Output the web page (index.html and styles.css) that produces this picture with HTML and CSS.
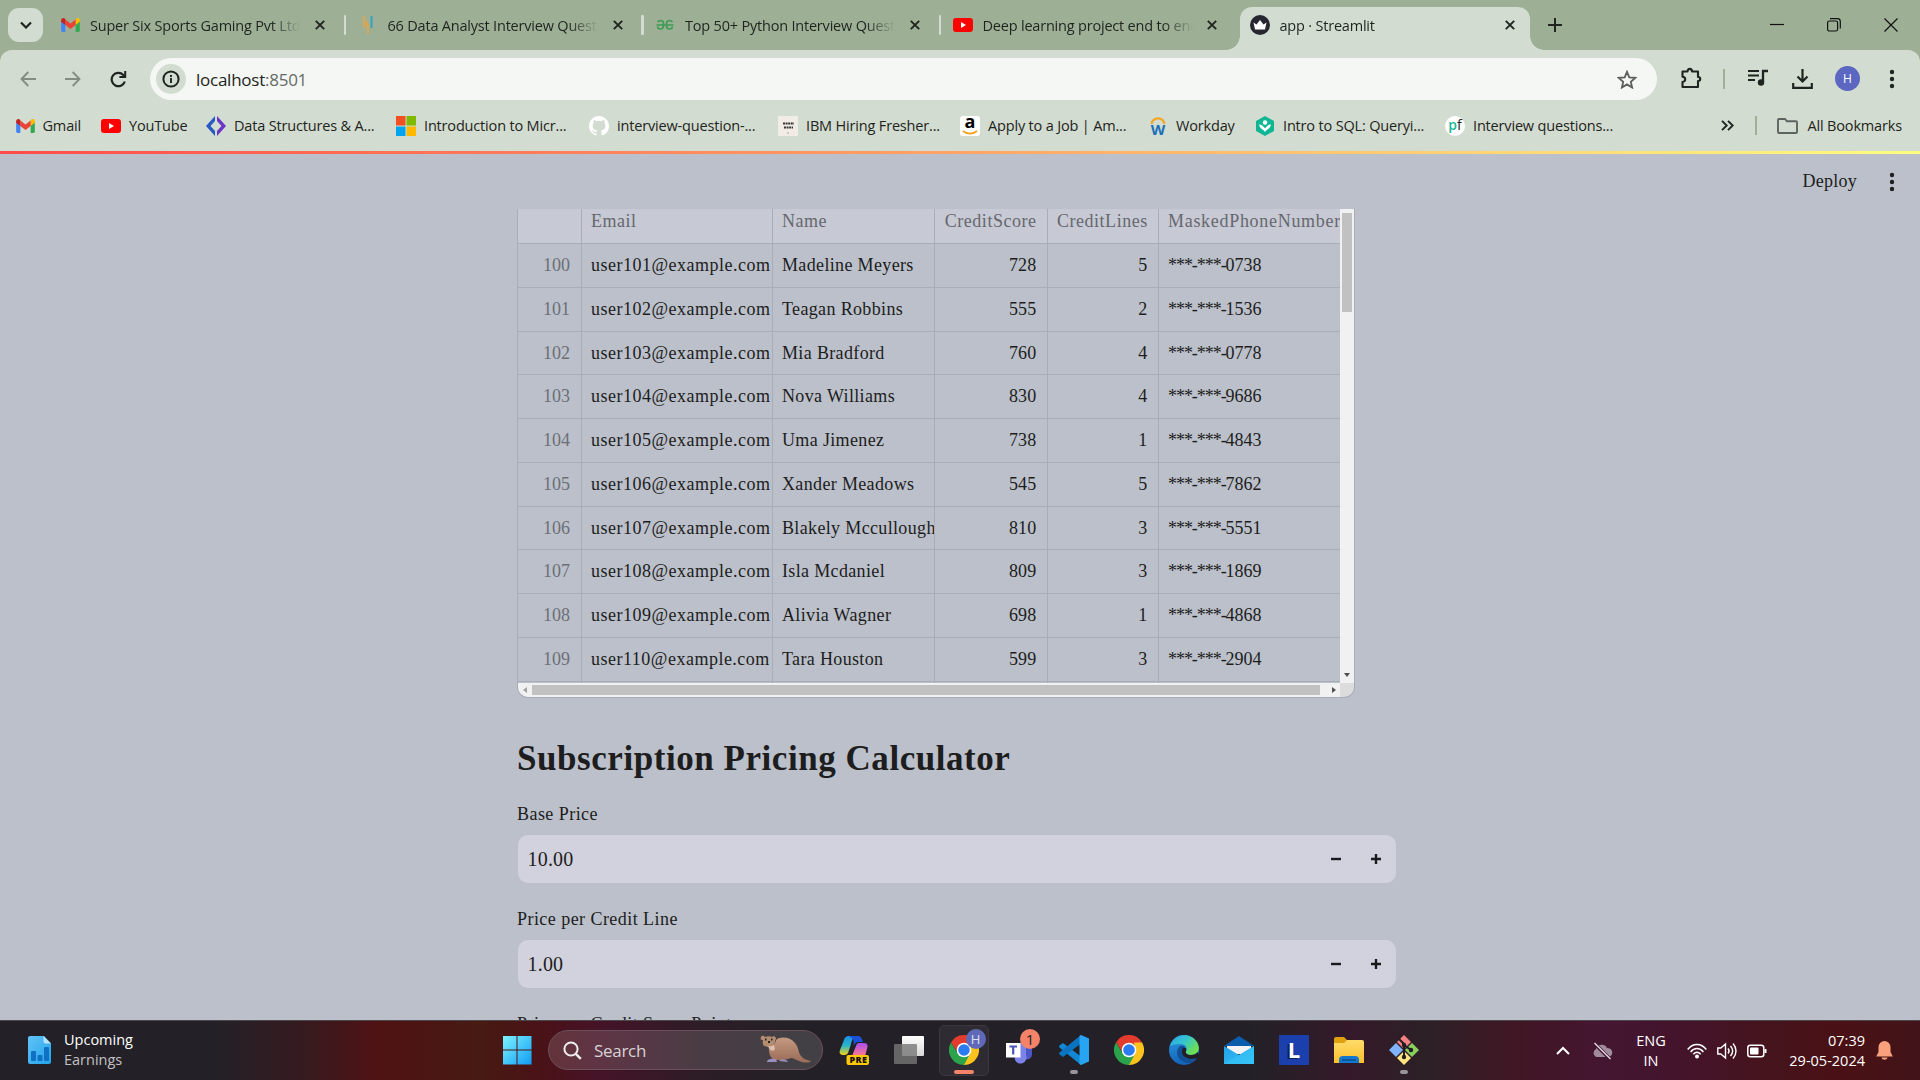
FILE: index.html
```html
<!DOCTYPE html>
<html lang="en">
<head>
<meta charset="utf-8">
<title>app · Streamlit</title>
<link rel="stylesheet" href="styles.css">
</head>
<body>
<svg class="defs" width="0" height="0" aria-hidden="true">
  <defs>
    <linearGradient id="win" x1="0" y1="0" x2="1" y2="1"><stop offset="0" stop-color="#7df3ff"/><stop offset="1" stop-color="#109cf5"/></linearGradient>
    <linearGradient id="doc" x1="0" y1="0" x2="1" y2="1"><stop offset="0" stop-color="#63c3f7"/><stop offset="1" stop-color="#20a4ec"/></linearGradient>
    <linearGradient id="copA" x1="0" y1="0" x2="0" y2="1"><stop offset="0" stop-color="#1f8fe8"/><stop offset=".5" stop-color="#27b6c9"/><stop offset="1" stop-color="#f4d414"/></linearGradient>
    <linearGradient id="copB" x1="0" y1="0" x2="0" y2="1"><stop offset="0" stop-color="#a94df0"/><stop offset="1" stop-color="#ff7a8a"/></linearGradient>
    <linearGradient id="edgeA" x1="0" y1="0" x2="1" y2=".6"><stop offset="0" stop-color="#2aa4e8"/><stop offset=".5" stop-color="#35c5d0"/><stop offset="1" stop-color="#6fe04c"/></linearGradient>
    <linearGradient id="edgeB" x1="0" y1="0" x2="0" y2="1"><stop offset="0" stop-color="#2b9be0"/><stop offset="1" stop-color="#1363b8"/></linearGradient>
    <linearGradient id="fold" x1="0" y1="0" x2="0" y2="1"><stop offset="0" stop-color="#ffdc6b"/><stop offset="1" stop-color="#fcbf2d"/></linearGradient>
    <linearGradient id="env" x1="0" y1="0" x2="1" y2="1"><stop offset="0" stop-color="#23a0e8"/><stop offset="1" stop-color="#35c4f5"/></linearGradient>
    <linearGradient id="pane" x1="0" y1="0" x2="0" y2="1"><stop offset="0" stop-color="#fff"/><stop offset="1" stop-color="#d8d8d8"/></linearGradient>
    <linearGradient id="fur" x1="0" y1="0" x2="0" y2="1"><stop offset="0" stop-color="#c49a7f"/><stop offset="1" stop-color="#9a6b57"/></linearGradient>
    <symbol id="gmail" viewBox="0 0 20 15"><path fill="#4285f4" d="M0 3v10.500a1.500 1.500 0 0 0 1.500 1.500H4.500V6z"/><path fill="#34a853" d="M15.500 15h3a1.500 1.500 0 0 0 1.500-1.500V3l-4.500 3z"/><path fill="#fbbc04" d="M15.500 2v5.500L20 4V2.500C20 .3 17.600-.8 16 .5z"/><path fill="#ea4335" d="M4.500 7.500V1.500L10 5.800l5.500-4.300v6L10 11.800z"/><path fill="#c5221f" d="M0 2.500V4l4.500 3.500V1.500L4 .6C2.400-.7 0 .3 0 2.500z"/></symbol>
    <symbol id="youtube" viewBox="0 0 20 14"><rect width="20" height="14" rx="3" fill="#f00"/><path fill="#fff" d="M8 4l5 3-5 3z"/></symbol>
    <symbol id="close" viewBox="0 0 10 10"><path d="M.8.8l8.400 8.400M9.200.8L.8 9.200" fill="none" stroke="#1f2420" stroke-width="1.900"/></symbol>
    <symbol id="dots" viewBox="0 0 6 20"><circle cx="3" cy="3" r="2.200"/><circle cx="3" cy="10" r="2.200"/><circle cx="3" cy="17" r="2.200"/></symbol>
    <symbol id="chrome" viewBox="0 0 30 30"><path fill="#e33b2e" d="M2 7.500A15 15 0 0 1 28 7.500L28 9H15l-6 9z"/><path fill="#fcc31e" d="M28 7.500A15 15 0 0 1 15 30l-1-1 7-11-1-10.500z"/><path fill="#2ba24c" d="M2 7.500A15 15 0 0 0 15 30l6.200-11.500L15 21.500l-6.200-3z"/><circle cx="15" cy="15" r="7.300" fill="#fff"/><circle cx="15" cy="15" r="5.800" fill="#2b7cf0"/></symbol>
  </defs>
</svg>

<div class="screen">
  <header class="browser">
    <div class="tabstrip">
      <button class="tab-search"><svg width="12" height="8" viewBox="0 0 12 8"><path d="M1 1.500l5 5 5-5" fill="none" stroke="#1f2420" stroke-width="2.200"/></svg></button>
      <div class="tab first"><svg class="fav" width="19" height="14"><use href="#gmail"/></svg><span class="tab-title">Super Six Sports Gaming Pvt Ltd</span><svg class="x" width="10" height="10"><use href="#close"/></svg></div>
      <div class="tab"><svg class="fav" width="20" height="20" viewBox="0 0 20 20"><path d="M6 1v12M9 6v5M10 9v10" stroke="#e5a646" stroke-width="1.800"/><path d="M13.500 1v12" stroke="#36a3bd" stroke-width="2"/></svg><span class="tab-title">66 Data Analyst Interview Questions</span><svg class="x" width="10" height="10"><use href="#close"/></svg></div>
      <div class="tab"><svg class="fav" width="20" height="20" viewBox="0 0 20 20"><path d="M1.500 10h17M2.500 7c1.500-2 6-2 6 1.500v2c0 4.500-5.500 4.500-6 1M17.500 7c-1.500-2-6-2-6 1.500v2c0 4.500 5.500 4.500 6 1" fill="none" stroke="#3f9b56" stroke-width="1.700"/></svg><span class="tab-title">Top 50+ Python Interview Questions</span><svg class="x" width="10" height="10"><use href="#close"/></svg></div>
      <div class="tab last"><svg class="fav" width="20" height="14"><use href="#youtube"/></svg><span class="tab-title">Deep learning project end to end</span><svg class="x" width="10" height="10"><use href="#close"/></svg></div>
      <div class="tab active"><svg class="fav" width="20" height="20" viewBox="0 0 20 20"><circle cx="10" cy="10" r="10" fill="#262730"/><path d="M3.500 7.500l3 2L10 5l3.500 4.500 3-2-1.500 7H5z" fill="#fff"/></svg><span class="tab-title">app · Streamlit</span><svg class="x" width="10" height="10"><use href="#close"/></svg></div>
      <svg class="new-tab" width="14" height="14" viewBox="0 0 14 14"><path d="M7 0v14M0 7h14" stroke="#1f2420" stroke-width="2"/></svg>
      <div class="window-buttons">
        <svg width="14" height="14" viewBox="0 0 14 14"><path d="M0 6.500h14" stroke="#111" stroke-width="1.200"/></svg>
        <svg width="14" height="14" viewBox="0 0 14 14"><g fill="none" stroke="#111" stroke-width="1.200"><rect x=".6" y="3" width="10" height="10" rx="1.800"/><path d="M3 .7h7.500a2.800 2.800 0 0 1 2.800 2.800V10.500"/></g></svg>
        <svg width="14" height="14" viewBox="0 0 14 14"><path d="M.5.5l13 13M13.500.5l-13 13" stroke="#111" stroke-width="1.200"/></svg>
      </div>
    </div>

    <div class="toolbar">
      <nav class="nav-buttons">
        <svg width="16" height="16" viewBox="0 0 16 16"><path d="M16 8H1.500M8.300 1L1.500 8l6.800 7" fill="none" stroke="#858c84" stroke-width="1.900"/></svg>
        <svg width="16" height="16" viewBox="0 0 16 16"><path d="M0 8h14.500M7.700 1l6.800 7-6.800 7" fill="none" stroke="#858c84" stroke-width="1.900"/></svg>
        <svg width="17" height="17" viewBox="0 0 17 17"><path d="M14.800 10.500a6.700 6.700 0 1 1-1.500-6.600l1 1.200" fill="none" stroke="#1f2420" stroke-width="2.200"/><path d="M16.200 0v7H9.400V5h4.800V0z" fill="#1f2420"/></svg>
      </nav>
      <div class="omnibox">
        <span class="site-info"><svg width="18" height="18" viewBox="0 0 18 18"><circle cx="9" cy="9" r="7.600" fill="none" stroke="#1f2420" stroke-width="2"/><path d="M9 8v5M9 5v1.900" stroke="#1f2420" stroke-width="1.900"/></svg></span>
        <span class="url">localhost<i>:8501</i></span>
        <svg class="star" width="20" height="19" viewBox="0 0 20 19"><path d="M10 1.800l2.300 5.500 6 .5-4.500 4 1.300 5.700-5.100-3.100-5.100 3.100 1.300-5.700-4.500-4 6-.5z" fill="none" stroke="#5a5f5a" stroke-width="1.800"/></svg>
      </div>
      <svg class="ext" width="22" height="22" viewBox="0 0 22 22"><path d="M3 4.500h4.500c0-3.500 4.500-3.500 4.500 0h6v5.500c3 0 3 4 0 4v6H2.500v-5c3.600-.5 3.600-5 0-5.200V4.500z" fill="none" stroke="#1f2420" stroke-width="2.100" stroke-linejoin="round"/></svg>
      <i class="bar"></i>
      <svg class="music" width="20" height="18" viewBox="0 0 20 18"><path d="M0 2h11M0 6.500h11M0 11h7" stroke="#1f2420" stroke-width="2"/><path d="M15 1v12M14 2h6" stroke="#1f2420" stroke-width="2.300"/><circle cx="13" cy="13.500" r="3.200" fill="#1f2420"/></svg>
      <svg class="down" width="21" height="20" viewBox="0 0 21 20"><path d="M10.500 0v12M5.500 7.500l5 5 5-5M1.200 14v4.800h18.600V14" fill="none" stroke="#1f2420" stroke-width="2.200"/></svg>
      <span class="avatar">H</span>
      <svg class="menu" width="6" height="20" fill="#1f2420"><use href="#dots"/></svg>
    </div>

    <div class="bookmarks">
      <a><svg width="19" height="14"><use href="#gmail"/></svg><span>Gmail</span></a>
      <a><svg width="20" height="14"><use href="#youtube"/></svg><span>YouTube</span></a>
      <a><svg width="20" height="20" viewBox="0 0 20 20"><path d="M9 0L0 10l9 10v-5L4.500 10 9 5z" fill="#2759c5"/><path d="M11 0l9 10-9 10v-5l4.500-5L11 5z" fill="#6b35c9"/></svg><span>Data Structures &amp; A...</span></a>
      <a><svg width="20" height="20" viewBox="0 0 20 20"><path fill="#f25022" d="M0 0h9.500v9.500H0z"/><path fill="#7fba00" d="M10.500 0H20v9.500h-9.500z"/><path fill="#00a4ef" d="M0 10.500h9.500V20H0z"/><path fill="#ffb900" d="M10.500 10.500H20V20h-9.500z"/></svg><span>Introduction to Micr...</span></a>
      <a><svg width="20" height="20" viewBox="0 0 16 16"><path fill="#fff" d="M8 0C3.580 0 0 3.580 0 8c0 3.540 2.290 6.530 5.470 7.590.4.070.55-.17.55-.38 0-.19-.01-.82-.01-1.490-2.010.37-2.530-.49-2.690-.94-.09-.23-.48-.94-.82-1.130-.28-.15-.68-.52-.01-.53.63-.01 1.080.58 1.230.82.720 1.210 1.870.87 2.330.66.070-.52.280-.87.510-1.070-1.780-.2-3.640-.89-3.640-3.950 0-.87.310-1.590.82-2.150-.08-.2-.36-1.020.08-2.120 0 0 .67-.21 2.200.82a7.640 7.640 0 0 1 4 0c1.530-1.040 2.200-.82 2.200-.82.440 1.100.16 1.920.08 2.120.51.560.82 1.270.82 2.150 0 3.070-1.870 3.750-3.650 3.950.29.250.54.730.54 1.480 0 1.070-.01 1.930-.01 2.200 0 .21.150.46.550.38A8.010 8.010 0 0 0 16 8c0-4.420-3.580-8-8-8z"/></svg><span>interview-question-...</span></a>
      <a><svg width="20" height="20" viewBox="0 0 20 20"><path fill="#f1ece6" d="M0 0h20v20H0z"/><path d="M5 7.500h11M6 11.500h9" stroke="#333" stroke-width="2" stroke-dasharray="2 .6"/><path d="M9 17h2" stroke="#aaa"/></svg><span>IBM Hiring Fresher...</span></a>
      <a><span class="amazon">a<svg width="16" height="5" viewBox="0 0 16 5"><path d="M1 1c4 3.500 10 3.500 14 0" fill="none" stroke="#f8a21c" stroke-width="1.700"/></svg></span><span>Apply to a Job | Am...</span></a>
      <a><span class="workday"><svg width="16" height="7" viewBox="0 0 16 7"><path d="M1.500 7C3-.5 13-.5 14.500 7" fill="none" stroke="#f5a623" stroke-width="2.200"/></svg>W</span><span>Workday</span></a>
      <a><svg width="20" height="20" viewBox="0 0 20 20"><path d="M10 0l9 5v10l-9 5-9-5V5z" fill="#10b694"/><circle cx="10" cy="6.500" r="2.200" fill="#fff"/><path d="M4 8.500c1 5 4 4 6 7.500 2-3.500 5-2.500 6-7.500-3 0-4.500 2-6 4-1.500-2-3-4-6-4z" fill="#fff"/></svg><span>Intro to SQL: Queryi...</span></a>
      <a><span class="pf"><b>p</b>f</span><span>Interview questions...</span></a>
      <svg class="more" width="13" height="11" viewBox="0 0 13 11"><path d="M1 .8l4.700 4.700L1 10.200M7 .8l4.700 4.700L7 10.200" fill="none" stroke="#1f2420" stroke-width="1.900"/></svg>
      <i class="bar"></i>
      <a class="all"><svg width="21" height="16" viewBox="0 0 21 16"><path d="M1 14V2a1 1 0 0 1 1-1h6l2 2.300h9a1 1 0 0 1 1 1V14a1 1 0 0 1-1 1H2a1 1 0 0 1-1-1z" fill="none" stroke="#5f6360" stroke-width="1.900"/></svg><span>All Bookmarks</span></a>
    </div>
  </header>

  <main class="app">
    <div class="decoration"></div>
    <div class="app-header"><span>Deploy</span><svg width="6" height="20" fill="#1f1f22"><use href="#dots"/></svg></div>
    <section class="block">
      <div class="frame">
        <div class="grid">
          <div class="row head"><span></span><span>Email</span><span>Name</span><span>CreditScore</span><span>CreditLines</span><span>MaskedPhoneNumber</span></div>
          <div class="row"><span>100</span><span>user101@example.com</span><span>Madeline Meyers</span><span>728</span><span>5</span><span><i>***-***-</i>0738</span></div>
          <div class="row"><span>101</span><span>user102@example.com</span><span>Teagan Robbins</span><span>555</span><span>2</span><span><i>***-***-</i>1536</span></div>
          <div class="row"><span>102</span><span>user103@example.com</span><span>Mia Bradford</span><span>760</span><span>4</span><span><i>***-***-</i>0778</span></div>
          <div class="row"><span>103</span><span>user104@example.com</span><span>Nova Williams</span><span>830</span><span>4</span><span><i>***-***-</i>9686</span></div>
          <div class="row"><span>104</span><span>user105@example.com</span><span>Uma Jimenez</span><span>738</span><span>1</span><span><i>***-***-</i>4843</span></div>
          <div class="row"><span>105</span><span>user106@example.com</span><span>Xander Meadows</span><span>545</span><span>5</span><span><i>***-***-</i>7862</span></div>
          <div class="row"><span>106</span><span>user107@example.com</span><span>Blakely Mccullough</span><span>810</span><span>3</span><span><i>***-***-</i>5551</span></div>
          <div class="row"><span>107</span><span>user108@example.com</span><span>Isla Mcdaniel</span><span>809</span><span>3</span><span><i>***-***-</i>1869</span></div>
          <div class="row"><span>108</span><span>user109@example.com</span><span>Alivia Wagner</span><span>698</span><span>1</span><span><i>***-***-</i>4868</span></div>
          <div class="row"><span>109</span><span>user110@example.com</span><span>Tara Houston</span><span>599</span><span>3</span><span><i>***-***-</i>2904</span></div>
          <div class="row stub"><span></span><span></span><span></span><span></span><span></span><span></span></div>
        </div>
        <div class="vscroll"><i></i><svg width="6" height="4" viewBox="0 0 6 4"><path d="M0 0h6L3 4z" fill="#505050"/></svg></div>
        <div class="hscroll"><svg width="4" height="6" viewBox="0 0 4 6"><path d="M4 0v6L0 3z" fill="#a3a3a3"/></svg><i></i><svg width="4" height="6" viewBox="0 0 4 6"><path d="M0 0v6l4-3z" fill="#505050"/></svg></div>
        <div class="corner"></div>
      </div>
      <h3>Subscription Pricing Calculator</h3>
      <label class="field"><span>Base Price</span>
        <div class="number"><b>10.00</b><svg width="12" height="12" viewBox="0 0 12 12"><path d="M1 6h10" stroke="#1a1a1e" stroke-width="2.400"/></svg><svg width="12" height="12" viewBox="0 0 12 12"><path d="M1 6h10M6 1v10" stroke="#1a1a1e" stroke-width="2.400"/></svg></div></label>
      <label class="field"><span>Price per Credit Line</span>
        <div class="number"><b>1.00</b><svg width="12" height="12" viewBox="0 0 12 12"><path d="M1 6h10" stroke="#1a1a1e" stroke-width="2.400"/></svg><svg width="12" height="12" viewBox="0 0 12 12"><path d="M1 6h10M6 1v10" stroke="#1a1a1e" stroke-width="2.400"/></svg></div></label>
      <label class="field"><span>Price per Credit Score Point</span></label>
    </section>
  </main>

  <footer class="taskbar">
    <div class="widget">
      <svg width="24" height="28" viewBox="0 0 24 28"><path d="M2 0h14l7 7.500V26a2 2 0 0 1-2 2H2a2 2 0 0 1-2-2V2a2 2 0 0 1 2-2z" fill="url(#doc)"/><path d="M15.500 0l7.500 7.500h-5.500a2 2 0 0 1-2-2z" fill="#b5e6ff"/><g fill="#1070c4"><rect x="3" y="15" width="5" height="10" rx="1"/><rect x="9.500" y="19" width="5" height="6" rx="1"/><rect x="16" y="11" width="5" height="14" rx="1"/></g></svg>
      <p>Upcoming<br><span>Earnings</span></p>
    </div>
    <div class="cell start"><svg width="30" height="30" viewBox="0 0 30 30"><path fill="url(#win)" d="M1 1h13.500v13.500H1zM15.500 1H29.500v13.500h-14zM1 15.500h13.500v14H1zM15.500 15.500h14v14h-14z"/></svg></div>
    <div class="search">
      <svg width="19" height="19" viewBox="0 0 19 19"><circle cx="8" cy="8" r="6.600" fill="none" stroke="#eee" stroke-width="2"/><path d="M12.800 12.800l5 5" stroke="#eee" stroke-width="2.500"/></svg>
      <span>Search</span>
      <svg class="otter" width="52" height="30" viewBox="0 0 52 30"><path d="M9 10c3 1 6 0 7-5 5-4 14-3 19 3 4 5 3 9 6 13 2 3 6 4 10 5-1 2-8 2-12 0-3-1-6-3-8-3-5 2-10 2-14 2-6 0-9-6-8-15z" fill="url(#fur)"/><path d="M1 2c1-2 3-1 4 0 2-1 5-1 7 0 1-1 3-1 4 1 0 2-1 2-1 3 0 4-3 6-7 6S2 10 3 5C1 5 0 4 1 2z" fill="#b48c70"/><path d="M8 11c3 1 4 0 6-1l1 4c-2 3-5 2-7-3z" fill="#dfc0b0"/><path d="M5 4.500h1.500M11 4.500h1.500M8 7h2" stroke="#222" stroke-width="1.800"/><path d="M7 27c0-3 5-4 9-3l1 3zM19 26c2-3 8-2 9 1z" fill="#9b8ec0"/></svg>
    </div>
    <div class="cell copilot"><svg width="30" height="30" viewBox="0 0 30 30"><path d="M5 5c1-3 2-4 5-4h8c-4 0-5 4-6 8l-2 6c-1 4-2 5-5 5C1 20 0 18 1 15z" fill="url(#copA)"/><path d="M12 1h7c3 0 4 3 5 6h-5c-2 0-4 2-5 5 2-5 0-10-4-10z" fill="#1b50d8"/><path d="M20 8h5c4 0 4 3 3 6l-2 7H13l4-10c.8-2 1-3 3-3z" fill="url(#copB)"/><rect x="7.500" y="20" width="22.500" height="10" rx="2" fill="#fcc80a"/></svg><em>PRE</em></div>
    <div class="cell"><svg width="30" height="30" viewBox="0 0 30 30"><rect x="8" y="1" width="22" height="20" rx="1" fill="url(#pane)"/><rect x="0" y="9" width="23" height="20" rx="1" fill="#777" fill-opacity=".8"/></svg></div>
    <div class="cell on"><svg width="30" height="30"><use href="#chrome"/></svg><em class="badge user">H</em><i class="run wide"></i></div>
    <div class="cell"><svg width="30" height="30" viewBox="0 0 30 30"><circle cx="24" cy="7" r="4" fill="#5a62c8"/><path d="M17 12h11v8a5 5 0 0 1-7 4z" fill="#4e56c4"/><path d="M10 8h12v12a6 6 0 0 1-11 5z" fill="#7b83eb"/><rect x="2" y="8" width="14.500" height="14.500" fill="#fff"/><path d="M5.500 11.500h7.500M9.200 11v8.500" stroke="#4b53bc" stroke-width="2.200"/></svg><em class="badge count">1</em></div>
    <div class="cell"><svg width="30" height="30" viewBox="0 0 30 30"><path d="M4 8l20 15-2 7L.5 12.500a1.500 1.500 0 0 1 0-2z" fill="#1187d6"/><path d="M4 22L24 7l-2-7L.5 17.500a1.500 1.500 0 0 0 0 2z" fill="#0a74c0"/><path d="M22 0l8 3.500v23L22 30l-1.500-1V1z" fill="#27a5f2"/></svg><i class="run"></i></div>
    <div class="cell"><svg width="30" height="30"><use href="#chrome"/></svg></div>
    <div class="cell"><svg width="30" height="30" viewBox="0 0 30 30"><circle cx="15" cy="15" r="15" fill="url(#edgeB)"/><path d="M1 11C4-1 21-4 28 7c4 7 1 13-6 13-4 0-6-2-5-4 2-4-1-7-6-7-5 0-8 1-10 2z" fill="url(#edgeA)"/><path d="M10 12c-5 6 0 17 12 16 3-1 5-3 6-5-6 3-13 1-14-5-.5-3 1-5 2-6-2-2-5-1-6 0z" fill="#124f97"/><path d="M14 13c3-1 4 1 3 3-1 2 1 4 5 4 3 0 5-1 7-3l1 4-1.500 2c-5 2-10 1-12.500-1-3-2-4-6-2-9z" fill="#211f25"/></svg></div>
    <div class="cell"><svg width="30" height="30" viewBox="0 0 30 30"><path d="M0 11L15 1l15 10z" fill="#0b5cad"/><path d="M3 11h24v8H3z" fill="#f3f3f3"/><path d="M0 11l15 9 15-9v18H0z" fill="url(#env)"/><path d="M0 29l15-9L30 11v18z" fill="#37c3f6" opacity=".6"/></svg></div>
    <div class="cell"><span class="letter">L</span></div>
    <div class="cell"><svg width="30" height="30" viewBox="0 0 30 30"><path d="M0 4a2 2 0 0 1 2-2h8l3 3h15v10H0z" fill="#dfa00f"/><path d="M0 8h10l3-3h15a2 2 0 0 1 2 2v21H0z" fill="url(#fold)"/><path d="M5 28v-3a4 4 0 0 1 4-4h12a4 4 0 0 1 4 4v3z" fill="#1277cd"/><path d="M8 25h14" stroke="#0b4c8c" stroke-width="1.500"/></svg></div>
    <div class="cell"><svg width="30" height="30" viewBox="0 0 30 30"><path d="M15 0l7 7-7 7-7-7z" fill="#f38181"/><path d="M7 8l7 7-7 7-7-7z" fill="#80b3ff"/><path d="M23 8l7 7-7 7-7-7z" fill="#8ad05c"/><path d="M15 16l7 7-7 7-7-7z" fill="#ffe480"/><g fill="none" stroke="#211c22" stroke-width="2"><path d="M10 4l5 5v15M15 10l7 5"/></g><circle cx="15" cy="22" r="2.200" fill="#211c22"/><circle cx="22" cy="15" r="2.200" fill="#211c22"/><circle cx="15" cy="10" r="2.200" fill="#211c22"/></svg><i class="run"></i></div>
    <div class="tray">
      <svg class="up" width="14" height="9" viewBox="0 0 14 9"><path d="M1 8l6-6 6 6" fill="none" stroke="#fff" stroke-width="2"/></svg>
      <svg class="cloud" width="22" height="18" viewBox="0 0 22 18"><path d="M5 15a4.500 4.500 0 0 1 0-8c1-5 9-6 11-1 4 0 6 3 5 6-.5 2-2 3-4 3z" fill="#a08c9c"/><path d="M3 1l16 16" stroke="#421530" stroke-width="3.500"/><path d="M3.500 1l16 16" stroke="#e6dde4" stroke-width="1.400"/></svg>
      <p class="lang">ENG<br>IN</p>
      <svg class="wifi" width="20" height="16" viewBox="0 0 20 16"><g fill="none" stroke="#fff" stroke-width="1.500"><path d="M.7 6.500c5-6.700 13.600-6.700 18.600 0"/><path d="M3.600 9c3.700-4.600 9.100-4.600 12.800 0"/><path d="M6.300 11.300c2.300-2.700 5.100-2.700 7.400 0"/></g><circle cx="10" cy="13.500" r="2" fill="#fff"/></svg>
      <svg class="sound" width="20" height="18" viewBox="0 0 20 18"><g fill="none" stroke="#fff" stroke-width="1.400"><path d="M.8 6h3L8.500 2v14L3.800 12h-3z"/><path d="M11 6.500c1.300 1.500 1.300 3.500 0 5M13.500 4c2.600 3 2.600 7 0 10M16 1.500c4 4.500 4 10.500 0 15"/></g></svg>
      <svg class="battery" width="20" height="14" viewBox="0 0 20 14"><rect x=".8" y="1.300" width="16" height="11.400" rx="2.500" fill="none" stroke="#fff" stroke-width="1.500"/><rect x="3" y="3.500" width="8.500" height="7" rx="1" fill="#fff"/><path d="M18.500 5v4" stroke="#fff" stroke-width="2"/></svg>
      <p class="clock">07:39<br>29-05-2024</p>
      <svg class="bell" width="17" height="19" viewBox="0 0 17 19"><path d="M8.500 0a6 6 0 0 1 6 6v5l2.300 4.500H.2L2.500 11V6a6 6 0 0 1 6-6zM5.500 16.500h6c-.5 3-5.500 3-6 0z" fill="#f9a07c"/></svg>
    </div>
  </footer>
</div>
</body>
</html>
```
FILE: styles.css
```css
* { box-sizing: border-box; }
body { margin: 0; font-family: "Open Sans", "Noto Sans", sans-serif; color: #1f2420; }
i, em { font-style: normal; }
svg { display: block; flex: none; }
.defs { position: absolute; }
.screen { width: 1920px; height: 1080px; overflow: hidden; display: flex; flex-direction: column; }

/* Browser chrome */
.browser { flex: none; height: 151px; background: #9db095; }
.tabstrip { height: 50px; display: flex; align-items: center; padding-left: 8px; }
.tab-search { width: 35px; height: 34px; border: 0; border-radius: 11px; background: #d2dcd0; padding: 0; display: grid; place-items: center; }
.tab { position: relative; width: 297.500px; height: 50px; display: flex; align-items: center; padding: 0 21px 0 11.500px; }
.tab.first { width: 303px; padding-left: 18px; }
.tab::after { content: ""; position: absolute; right: 0; top: 15px; width: 2.500px; height: 20px; border-radius: 1px; background: #d2dcd0; }
.fav { width: 20px; margin-right: 10px; }
.first .fav { width: 19px; }
.tab-title { flex: 1; max-width: 210px; overflow: hidden; white-space: nowrap; padding-top: 1px; font-size: 14.500px; letter-spacing: -.2px; line-height: 22px; mask-image: linear-gradient(90deg, #000 86%, transparent 100%); }
.x { margin-left: auto; }
.tab.last { width: 298.500px; padding-right: 22.500px; }
.tab.last::after { display: none; }
.tab.active { width: 290px; height: 43px; align-self: flex-end; background: #d2dcd0; border-radius: 12px 12px 0 0; padding: 0 15px 7px 10px; }
.tab.active::before, .tab.active::after { content: ""; display: block; position: absolute; top: auto; bottom: 0; width: 14px; height: 14px; background: none; border-radius: 0; }
.tab.active::before { left: -14px; background: radial-gradient(circle at 0 0, transparent 13.500px, #d2dcd0 14px); }
.tab.active::after { right: -14px; background: radial-gradient(circle at 100% 0, transparent 13.500px, #d2dcd0 14px); }
.new-tab { margin-left: 18px; }
.window-buttons { margin-left: auto; display: flex; gap: 43px; padding-right: 22px; }

.toolbar { height: 58px; background: #d2dcd0; border-radius: 12px 12px 0 0; padding-top: 8px; display: flex; align-items: flex-start; }
.nav-buttons { width: 150px; height: 42px; display: flex; align-items: center; gap: 29px; padding-left: 19.500px; }
.omnibox { width: 1507px; height: 42px; border-radius: 21px; background: #f4f7f3; display: flex; align-items: center; padding: 0 20px 0 6px; }
.site-info { width: 30px; height: 30px; border-radius: 50%; background: #d2dcd0; display: grid; place-items: center; }
.url { margin-left: 10px; font-size: 17px; letter-spacing: -.25px; }
.url i { color: #666b67; }
.star { margin-left: auto; }
.toolbar .bar { width: 2px; height: 20px; background: #9db095; margin: 11px 23px 0 21px; }
.ext { height: 22px; margin: 9px 0 0 23px; }
.music { height: 18px; margin-top: 11px; }
.down { height: 20px; margin: 11px 0 0 24px; }
.avatar { width: 25px; height: 25px; margin: 8px 0 0 22px; border-radius: 50%; background: #5b67c0; color: #fff; font-size: 12px; line-height: 25px; text-align: center; }
.menu { height: 20px; margin: 11px 0 0 29px; }

.bookmarks { height: 43px; background: #d2dcd0; display: grid; align-items: center; padding: 0 0 8px 15.500px; grid-template-columns: 85.500px 105px 190px 193px 189px 182px 188px 107px 190px 275.500px 34.500px 21.500px 1fr; font-size: 14.500px; letter-spacing: -.17px; }
.bookmarks a { display: flex; align-items: center; gap: 8px; white-space: nowrap; }
.bookmarks .bar { width: 2px; height: 19px; background: #9db095; }
.bookmarks .all { gap: 10px; }
.amazon, .workday, .pf { width: 20px; height: 20px; position: relative; letter-spacing: 0; text-align: center; }
.amazon { background: #fff; border-radius: 3px; color: #000; font-weight: 700; font-size: 18px; line-height: 11px; }
.amazon svg { position: absolute; left: 2px; bottom: 1px; }
.workday { color: #1a70b8; font-weight: 700; font-size: 15px; line-height: 27px; }
.workday svg { position: absolute; left: 2px; top: 1px; }
.pf { border-radius: 50%; background: #fff; font-size: 14px; line-height: 18px; }
.pf b { color: #17b897; font-weight: 600; }

/* Streamlit page */
.app { flex: none; height: 869px; background: #bbc0ca; overflow: hidden; font-family: "Liberation Serif", serif; color: #1d1d20; }
.decoration { height: 3px; background: linear-gradient(90deg, #ff4b4b, #fffd80); }
.app-header { height: 55px; display: flex; justify-content: flex-end; align-items: center; gap: 32px; padding-right: 25px; font-size: 18px; letter-spacing: .25px; }
.block { width: 880px; margin-left: 517px; }
.frame { width: 838px; height: 489px; display: grid; grid-template: 474px 14px / 822px 14px; border: 1px solid #a9adb8; border-top: 0; border-radius: 0 0 11px 11px; overflow: hidden; }
.grid { overflow: hidden; }
.row { display: grid; grid-template-columns: 64px 191px 162px 113px 111px 181px; height: 43.750px; border-bottom: 1px solid #a9adb8; font-size: 18px; letter-spacing: .35px; line-height: 43px; }
.row span { border-right: 1px solid #a9adb8; padding: 0 0 0 9px; white-space: nowrap; overflow: hidden; }
.row span:first-child { text-align: right; padding-right: 11px; color: #6c6f76; letter-spacing: 0; }
.row span:nth-child(2) { letter-spacing: .5px; }
.row span:nth-child(4), .row span:nth-child(5) { text-align: right; padding-right: 10.500px; letter-spacing: .2px; }
.row span:last-child { border: 0; letter-spacing: 0; }
.row span i { letter-spacing: -1.050px; }
.row.head { height: 35px; background: #c7cad4; color: #66676e; line-height: 24px; }
.row.head span { letter-spacing: .52px; }
.row.head span:last-child { letter-spacing: .7px; }
.vscroll { background: #f1f1f1; padding: 4px 2px 6px; display: flex; flex-direction: column; align-items: center; justify-content: space-between; }
.vscroll i { width: 10px; height: 99px; background: #c1c1c1; }
.hscroll { background: #f1f1f1; display: flex; align-items: center; padding: 0 4px 0 5px; }
.hscroll i { width: 788px; height: 10px; background: #c1c1c1; margin: 0 auto 0 5px; }
.corner { background: #dcdcdc; }
h3 { margin: 38px 0 0; height: 46px; line-height: 46px; font-size: 35px; font-weight: 700; letter-spacing: .55px; white-space: nowrap; }
.field { display: block; height: 105px; }
.field > span { display: block; height: 34px; line-height: 26px; font-size: 18px; letter-spacing: .45px; }
h3 + .field { margin-top: 19px; }
.number { width: 878.500px; height: 48px; border-radius: 10px; background: #d2d2de; margin-left: .5px; display: flex; align-items: center; gap: 28px; padding: 0 14px 0 10px; }
.number b { font-weight: 400; font-size: 20px; letter-spacing: .2px; margin-right: auto; }

/* Windows taskbar */
.taskbar { flex: none; height: 60px; border-top: 1px solid #4c474b; display: flex; color: #fff; background: linear-gradient(90deg, #232127 0, #232127 215px, #351b20 300px, #4f1214 375px, #471a12 480px, #4a1218 545px, #461327 595px, #2d1d26 700px, #232127 800px, #232127 1250px, #35192a 1350px, #2c2026 1425px, #411624 1520px, #441631 1600px, #44142c 1680px, #45141c 1770px, #4a1115 1840px, #411419 1920px); }
.taskbar p { flex: none; margin: 0; font-size: 14.500px; line-height: 20px; }
.widget { width: 489px; display: flex; gap: 12px; padding: 9px 0 0 28px; }
.widget svg { margin-top: 6px; }
.widget span { color: #c4c1c4; }
.cell { position: relative; width: 55px; display: grid; place-items: center; padding-bottom: 1px; }
.search { width: 275px; height: 40px; margin: 9px 3.500px 0 4px; border: 1px solid #6b5059; border-radius: 20px; display: flex; align-items: center; padding: 0 10px 0 14px; background: rgba(255,255,255,.14); }
.search span { margin-left: 12px; font-size: 17px; letter-spacing: -.3px; color: #d9d2d6; }
.otter { margin-left: auto; }
.copilot em { position: absolute; left: 19px; width: 26px; top: 34px; text-align: center; font-size: 9px; font-weight: 800; line-height: 10px; color: #16130a; letter-spacing: .4px; }
.cell.on::before { content: ""; position: absolute; inset: 4px 2.500px; border-radius: 5px; background: #2e2c32; border: 1px solid #3a383e; }
.cell.on svg { position: relative; }
.badge { position: absolute; left: 29px; top: 8px; width: 20px; height: 20px; border-radius: 50%; text-align: center; font-size: 13px; line-height: 20px; }
.user { background: #5f69b8; color: #dfe1f6; }
.count { background: #f4836a; color: #231f25; left: 28.500px; font-size: 15px; }
.run { position: absolute; left: 23.500px; bottom: 6px; width: 8px; height: 4px; border-radius: 2px; background: #97949a; }
.run.wide { left: 17.500px; width: 20px; background: #f4836a; }
.letter { width: 30px; height: 30px; background: #1c3fae; text-align: center; font-size: 22px; line-height: 28px; font-weight: 700; text-shadow: -2px 1px #0b2058; }
.tray { flex: 1; display: flex; align-items: center; padding-left: 124.500px; }
.cloud { margin-left: 21px; }
.tray .lang { width: 40px; margin-left: 18px; text-align: center; }
.wifi { margin-left: 16px; }
.sound { margin-left: 10px; }
.battery { margin-left: 10px; }
.tray .clock { width: 90px; margin-left: 8px; text-align: right; white-space: nowrap; }
.bell { margin-left: 11px; }
```
